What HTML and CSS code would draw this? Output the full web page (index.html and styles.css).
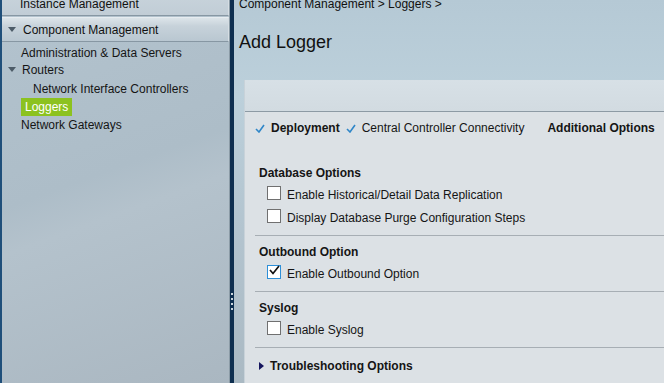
FILE: index.html
```html
<!DOCTYPE html>
<html lang="en">
<head>
    <meta charset="UTF-8">
    <meta name="viewport" content="width=device-width, initial-scale=1.0">
    <title>Add Logger</title>
    <link rel="stylesheet" href="styles.css">
</head>
<body>
    <div class="sidebar">
        <div class="nav-head nav-head-top">Instance Management</div>
        <div class="nav-head">
            <span class="tri-down"></span>Component Management
        </div>
        <ul class="nav-list">
            <li class="nav-item">Administration &amp; Data Servers</li>
            <li class="nav-item nav-group"><span class="tri-down tri-small"></span>Routers</li>
            <li class="nav-item nav-sub">Network Interface Controllers</li>
            <li class="nav-item"><span class="nav-active">Loggers</span></li>
            <li class="nav-item">Network Gateways</li>
        </ul>
    </div>

    <div class="divider">
        <div class="grip"><i></i><i></i><i></i><i></i></div>
    </div>

    <div class="main">
        <div class="breadcrumb">Component Management &gt; Loggers &gt;</div>
        <h1>Add Logger</h1>

        <div class="panel">
            <div class="panel-head"></div>
            <div class="steps">
                <span class="step done">
                    <svg width="10" height="9" viewBox="0 0 10 9"><path d="M1 5 L4 8 L9 1" fill="none" stroke="#2f86c8" stroke-width="1.6"/></svg>
                    <b>Deployment</b>
                </span>
                <span class="step done">
                    <svg width="10" height="9" viewBox="0 0 10 9"><path d="M1 5 L4 8 L9 1" fill="none" stroke="#2f86c8" stroke-width="1.6"/></svg>
                    Central Controller Connectivity
                </span>
                <span class="step current"><b>Additional Options</b></span>
            </div>

            <div class="section">
                <div class="section-title">Database Options</div>
                <label class="row"><span class="box"></span>Enable Historical/Detail Data Replication</label>
                <label class="row"><span class="box"></span>Display Database Purge Configuration Steps</label>
            </div>
            <div class="section">
                <div class="section-title">Outbound Option</div>
                <label class="row">
                    <span class="box checked">
                        <svg width="12" height="11" viewBox="0 0 12 11"><path d="M2 5 L5 8.5 L11 1" fill="none" stroke="#111" stroke-width="1.7"/></svg>
                    </span>Enable Outbound Option
                </label>
            </div>
            <div class="section">
                <div class="section-title">Syslog</div>
                <label class="row"><span class="box"></span>Enable Syslog</label>
            </div>
            <div class="collapsed">
                <span class="tri-right"></span><b>Troubleshooting Options</b>
            </div>
        </div>
    </div>
</body>
</html>
```

FILE: styles.css
```css
body {
    margin: 0;
    height: 383px;
    overflow: hidden;
    display: flex;
    font-family: "Liberation Sans", Arial, sans-serif;
    font-size: 12px;
    color: #151515;
}
.sidebar {
    width: 227px;
    flex-shrink: 0;
    border-left: 2px solid #1f4f7a;
    border-right: 1px solid #8b9ba6;
    background: linear-gradient(160deg, #b3c3ce 0%, #adbdc8 45%, #b4c2cc 55%, #aab7c1 100%);
}
.nav-head {
    height: 23px;
    line-height: 25px;
    padding-left: 5px;
    margin-top: 1px;
    font-size: 12px;
    color: #111;
    background: linear-gradient(#dce4e9 0%, #c7d2da 35%, #b9c7d1 100%);
    border-top: 1px solid #e6ecf0;
    border-bottom: 1px solid #8797a3;
    border-right: 1px solid #d5dde3;
}
.nav-head-top {
    margin-top: -10px;
    height: 24px;
    line-height: 26px;
    padding-left: 18px;
    background: linear-gradient(#c9d4dc, #c1cdd6);
}
.tri-down {
    display: inline-block;
    width: 0;
    height: 0;
    border-left: 4px solid transparent;
    border-right: 4px solid transparent;
    border-top: 5px solid #4d5c68;
    margin: -2px 7px 0 1px;
    vertical-align: middle;
}
.tri-small {
    margin: -2px 6px 0 0;
}
.nav-list {
    list-style: none;
    margin: 0;
    padding: 2px 0 0 0;
}
.nav-item {
    height: 18px;
    line-height: 18px;
    padding-left: 19px;
}
.nav-group {
    padding-left: 6px;
    margin-top: -1px;
    margin-bottom: 1px;
}
.nav-sub {
    padding-left: 31px;
}
.nav-active {
    display: inline-block;
    background: #8cc21f;
    color: #fff;
    padding: 0 4px;
    height: 18px;
    line-height: 19px;
}
.divider {
    width: 4px;
    flex-shrink: 0;
    background: #0e2f50;
    display: flex;
    flex-direction: column;
    align-items: center;
    padding-top: 293px;
    box-sizing: border-box;
}
.grip i {
    display: block;
    width: 2px;
    height: 2px;
    background: #c8d4dc;
    margin-bottom: 3px;
}
.main {
    flex: 1;
    overflow: hidden;
    padding-left: 5px;
    background: linear-gradient(#b5c9d5 0%, #bcd0db 25%, #b3c4cf 60%, #aab9c3 100%);
}
.breadcrumb {
    margin-top: -4px;
    line-height: 16px;
    color: #111;
}
h1 {
    font-size: 18px;
    font-weight: normal;
    line-height: 22px;
    margin: 19px 0 0 0;
    color: #111;
}
.panel {
    margin: 27px -30px 0 5px;
    height: 320px;
    background: #dce1e5;
    border-left: 1px solid #c8d2d9;
}
.panel-head {
    height: 31px;
    background: linear-gradient(#d7e0e6, #d2dbe1);
    border-bottom: 1px solid #8d9aa4;
}
.steps {
    height: 32px;
    display: flex;
    align-items: center;
    padding-left: 10px;
    margin-bottom: 13px;
}
.step {
    display: flex;
    align-items: center;
    gap: 6px;
    margin-right: 6px;
}
.step.current {
    margin-left: 17px;
}
.section {
    margin-left: 10px;
    padding: 8px 0 6px 4px;
    border-bottom: 1px solid #a7aeb4;
}
.section-title {
    font-weight: bold;
    line-height: 16px;
    margin-bottom: 2px;
}
.row {
    display: flex;
    align-items: center;
    height: 23px;
    padding-left: 8px;
}
.box {
    width: 12px;
    height: 12px;
    background: #fff;
    border: 1px solid #707070;
    margin-right: 6px;
    margin-top: -4px;
    display: flex;
    align-items: center;
    justify-content: center;
    flex-shrink: 0;
}
.box.checked {
    border-color: #2d8fd8;
}
.box.checked svg {
    margin-top: -2px;
}
.collapsed {
    margin-left: 14px;
    padding-top: 10px;
    line-height: 16px;
    display: flex;
    align-items: center;
}
.tri-right {
    width: 0;
    height: 0;
    border-top: 4px solid transparent;
    border-bottom: 4px solid transparent;
    border-left: 5px solid #15155e;
    margin-right: 6px;
}
```
